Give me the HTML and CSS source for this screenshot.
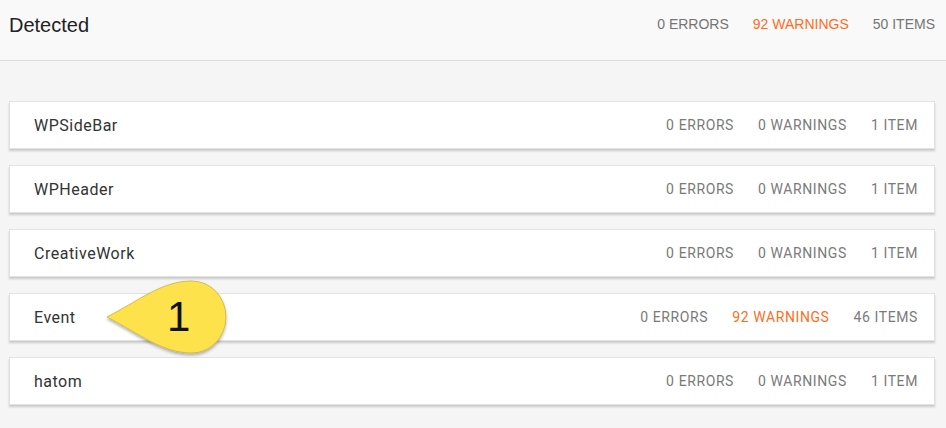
FILE: index.html
```html
<!DOCTYPE html>
<html lang="en">
<head>
    <meta charset="UTF-8">
    <meta name="viewport" content="width=device-width, initial-scale=1.0">
    <title>Detected</title>
    <link rel="stylesheet" href="styles.css">
</head>
<body>
    <div class="header">
        <h1>Detected</h1>
        <div class="totals">
            <span>0 ERRORS</span>
            <span class="warn">92 WARNINGS</span>
            <span>50 ITEMS</span>
        </div>
    </div>

    <div class="list">
        <div class="card">
            <span class="name">WPSideBar</span>
            <div class="stats"><span>0 ERRORS</span><span>0 WARNINGS</span><span>1 ITEM</span></div>
        </div>
        <div class="card">
            <span class="name">WPHeader</span>
            <div class="stats"><span>0 ERRORS</span><span>0 WARNINGS</span><span>1 ITEM</span></div>
        </div>
        <div class="card">
            <span class="name">CreativeWork</span>
            <div class="stats"><span>0 ERRORS</span><span>0 WARNINGS</span><span>1 ITEM</span></div>
        </div>
        <div class="card">
            <span class="name">Event</span>
            <div class="stats"><span>0 ERRORS</span><span class="warn">92 WARNINGS</span><span>46 ITEMS</span></div>
        </div>
        <div class="card">
            <span class="name">hatom</span>
            <div class="stats"><span>0 ERRORS</span><span>0 WARNINGS</span><span>1 ITEM</span></div>
        </div>
    </div>

    <!-- callout marker over the Event row -->
    <div class="callout">
        <svg width="140" height="90" viewBox="0 0 140 90">
            <defs>
                <filter id="sh" x="-20%" y="-20%" width="140%" height="150%">
                    <feDropShadow dx="0" dy="2" stdDeviation="1.5" flood-color="#000" flood-opacity="0.3"/>
                </filter>
            </defs>
            <path d="M7,43 C40,26 62,7 92,7 A34,36 0 0 1 92,79 C62,79 40,60 7,43 Z"
                  fill="#fde24c" stroke="#c9b23c" stroke-width="0.8" filter="url(#sh)"/>
        </svg>
        <span class="num">1</span>
    </div>
</body>
</html>
```

FILE: styles.css
```css
body {
    margin: 0;
    background-color: #f5f5f5;
    font-family: "Liberation Sans", Arial, sans-serif;
    position: relative;
}
.header {
    height: 61px;
    box-sizing: border-box;
    display: flex;
    justify-content: space-between;
    align-items: flex-start;
    padding: 12px 11px 0 9px;
    background-color: #f9f9f9;
    border-bottom: 1px solid #dcdcdc;
}
.header h1 {
    margin: 0;
    font-size: 20px;
    font-weight: normal;
    line-height: 26px;
    color: #222;
}
.totals {
    display: flex;
    gap: 24px;
    font-size: 14px;
    line-height: 24px;
    color: #757575;
}
.warn {
    color: #ff6d22;
}
.list {
    padding: 40px 11px 0 9px;
}
.card {
    height: 48px;
    box-sizing: border-box;
    margin-bottom: 16px;
    display: flex;
    justify-content: space-between;
    align-items: center;
    padding: 0 16px 0 24px;
    background: white;
    border: 1px solid #e2e2e2;
    box-shadow: 0 2px 2px rgba(0, 0, 0, 0.18);
    font-family: Roboto, "Liberation Sans", sans-serif;
}
.name {
    font-size: 16px;
    letter-spacing: 0.5px;
    color: #333;
}
.stats {
    display: flex;
    gap: 24px;
    font-size: 14px;
    letter-spacing: 0.6px;
    color: #7a7a7a;
}
.callout {
    position: absolute;
    left: 100px;
    top: 274px;
    width: 140px;
    height: 90px;
}
.callout svg {
    display: block;
}
.callout .num {
    position: absolute;
    left: 67px;
    top: 20px;
    font-family: "Liberation Sans", Arial, sans-serif;
    font-size: 42px;
    line-height: 46px;
    color: #111;
}
```
